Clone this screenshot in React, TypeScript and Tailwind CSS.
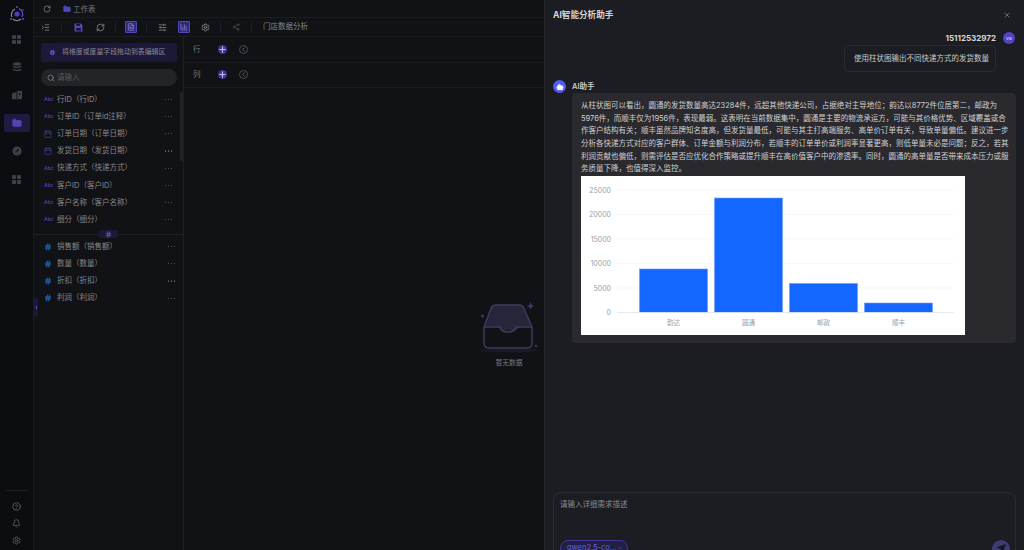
import React from "react";
import {
  RotateCw, Folder, IndentIncrease, RefreshCw, SlidersHorizontal, Share2, Search, Info, Plus, ChevronLeft,
  CircleHelp, Bell, Settings, X, Bot, Send, ChevronDown, Calendar, Hash, FileText, ChartColumn,
} from "lucide-react";

const F = { fontFamily: '"Inter","Noto Sans CJK SC",sans-serif' };

function Grid4({ c = "#3f4046" }: { c?: string }) {
  return (
    <svg width="9" height="9" viewBox="0 0 9 9">
      <rect x="0" y="0" width="4" height="4" rx="1" fill={c} />
      <rect x="5" y="0" width="4" height="4" rx="1" fill={c} />
      <rect x="0" y="5" width="4" height="4" rx="1" fill={c} />
      <rect x="5" y="5" width="4" height="4" rx="1" fill={c} />
    </svg>
  );
}

function Disc() {
  return (
    <svg width="10" height="10" viewBox="0 0 10 10">
      <ellipse cx="5" cy="2" rx="4.2" ry="1.7" fill="#3f4046" />
      <path d="M.8 3.6C2 5 8 5 9.2 3.6V5C8 6.4 2 6.4.8 5Z" fill="#3f4046" />
      <path d="M.8 6.6C2 8 8 8 9.2 6.6V8C8 9.6 2 9.6.8 8Z" fill="#3f4046" />
    </svg>
  );
}

function Store() {
  return (
    <svg width="10" height="10" viewBox="0 0 10 10">
      <path d="M0 3.5 4.5 2V9.2H0Z" fill="#3f4046" />
      <path d="M5.2 .8H10V9.2H5.2Z" fill="#3f4046" />
      <rect x="7" y="3" width="1.2" height="2" fill="#0c0d10" />
    </svg>
  );
}

function Needle() {
  return (
    <svg width="10" height="10" viewBox="0 0 10 10">
      <circle cx="5" cy="5" r="4.6" fill="#3f4046" />
      <path d="M7.2 2.8 5.8 5.8 4.2 4.2Z" fill="#0c0d10" />
      <path d="M2.8 7.2 4.2 4.2 5.8 5.8Z" fill="#0c0d10" opacity=".6" />
    </svg>
  );
}

function SaveIcon() {
  return (
    <svg width="9" height="9" viewBox="0 0 9 9">
      <path d="M.5 1Q.5.5 1 .5H6.8L8.5 2.2V8Q8.5 8.5 8 8.5H1Q.5 8.5.5 8Z" fill="#4f46b8" />
      <rect x="2.3" y="1" width="3.6" height="1.8" fill="#17161f" />
      <rect x="2.3" y="5" width="4.4" height="2.6" fill="#17161f" />
    </svg>
  );
}

function Logo() {
  return (
    <svg width="18" height="18" viewBox="0 0 18 18" fill="none">
      <path d="M4 12a6 6 0 0 1 3-8" stroke="#8a8b92" strokeWidth="1.2" />
      <path d="M11 3.6a6 6 0 0 1 3 8.4" stroke="#5b50c8" strokeWidth="1.2" />
      <path d="M5 14a6 6 0 0 0 8 0" stroke="#8a8b92" strokeWidth="1.2" />
      <circle cx="9" cy="9" r="2.6" fill="#4a3fc0" />
      <circle cx="9" cy="2" r="1" fill="#5b50c8" />
      <circle cx="3" cy="14" r="1" fill="#5b50c8" />
      <circle cx="15" cy="14" r="1" fill="#5b50c8" />
      <circle cx="15" cy="5" r="0.8" fill="#5b50c8" />
    </svg>
  );
}

const dims: [string, string][] = [
  ["a", "行ID（行ID）"],
  ["a", "订单ID（订单id注释）"],
  ["d", "订单日期（订单日期）"],
  ["d", "发货日期（发货日期）"],
  ["a", "快递方式（快递方式）"],
  ["a", "客户ID（客户ID）"],
  ["a", "客户名称（客户名称）"],
  ["a", "细分（细分）"],
];
const meas = ["销售额（销售额）", "数量（数量）", "折扣（折扣）", "利润（利润）"];

const lines = [
  "从柱状图可以看出，圆通的发货数量高达23284件，远超其他快递公司，占据绝对主导地位；韵达以8772件位居第二，邮政为",
  "5976件，而顺丰仅为1956件，表现最弱。这表明在当前数据集中，圆通是主要的物流承运方，可能与其价格优势、区域覆盖或合",
  "作客户结构有关；顺丰虽然品牌知名度高，但发货量最低，可能与其主打高端服务、高单价订单有关，导致单量偏低。建议进一步",
  "分析各快递方式对应的客户群体、订单金额与利润分布，若顺丰的订单单价或利润率显著更高，则低单量未必是问题；反之，若其",
  "利润贡献也偏低，则需评估是否应优化合作策略或提升顺丰在高价值客户中的渗透率。同时，圆通的高单量是否带来成本压力或服",
  "务质量下降，也值得深入监控。",
];

function Dots() {
  return <span className="ml-auto flex gap-[1.6px]">{[0, 1, 2].map((i) => <i key={i} className="block h-[1.2px] w-[1.2px] rounded-full bg-[#66676c]" />)}</span>;
}

function Chart() {
  const ys = [14, 38.5, 63, 87.5, 112];
  const yl = ["25000", "20000", "15000", "10000", "5000"];
  const bars: [number, number, string][] = [
    [58.5, 93, "韵达"],
    [133.5, 22, "圆通"],
    [208.5, 107.5, "邮政"],
    [283.5, 127, "顺丰"],
  ];
  return (
    <svg width="384" height="159" viewBox="0 0 384 159" className="block bg-white" style={{ fontFamily: '"Inter","Noto Sans CJK SC",sans-serif' }}>
      {ys.map((y, i) => (
        <g key={y}>
          <line x1="36" x2="373" y1={y} y2={y} stroke="#f3f4f6" strokeWidth="0.7" />
          <text x="30" y={y + 2.5} textAnchor="end" fontSize="7" fill="#9aa0ab">{yl[i]}</text>
        </g>
      ))}
      <text x="30" y="138.5" textAnchor="end" fontSize="7" fill="#9aa0ab">0</text>
      {bars.map(([x, y, l]) => (
        <g key={l}>
          <rect x={x} y={y} width="68" height={136.3 - y} fill="#1366ff" stroke="#6c9fff" strokeWidth="0.6" />
          <text x={x + 34} y="149" textAnchor="middle" fontSize="6.6" fill="#9aa0ab">{l}</text>
        </g>
      ))}
      <line x1="36" x2="373" y1="136.5" y2="136.5" stroke="#e2e4e9" strokeWidth="0.8" />
    </svg>
  );
}

function Empty() {
  return (
    <svg width="62" height="52" viewBox="0 0 62 52" fill="none">
      <ellipse cx="31" cy="48.5" rx="29" ry="1.8" fill="#1a1a20" />
      <path d="M13 6.5Q14 3 18 3H41Q45 3 46 6.5L53 24H43L38 28.5H24L19 24H6Z" fill="#26253a" />
      <path d="M6 25 13 6.5Q14 3 18 3H41Q45 3 46 6.5L54 25V41Q54 46 49 46H11Q6 46 6 41Z" stroke="#3f3c62" strokeWidth="1.4" strokeLinejoin="round" />
      <path d="M6 25H22Q23 30 30 30Q37 30 38 25H54" stroke="#3f3c62" strokeWidth="1.4" />
      <path d="M52.5 0 53.6 3 56.5 4 53.6 5 52.5 8 51.4 5 48.5 4 51.4 3Z" fill="#3f3c62" />
      <path d="M4.5 11.5 5.2 13.3 7 14 5.2 14.7 4.5 16.5 3.8 14.7 2 14 3.8 13.3Z" fill="#3f3c62" />
      <path d="M58 42 58.5 43.5 60 44 58.5 44.5 58 46 57.5 44.5 56 44 57.5 43.5Z" fill="#3f3c62" />
    </svg>
  );
}

const Sep = () => <span className="block h-[10px] w-px bg-[#1e1f24]" />;

export default function App() {
  return (
    <div className="flex h-[550px] w-[1024px] overflow-hidden bg-[#111216] text-[7.5px] leading-none text-[#85868a]" style={F}>
      {/* rail */}
      <aside className="flex w-[34px] shrink-0 flex-col items-center border-r border-[#1b1c20] bg-[#0c0d10] pt-[5px]">
        <Logo />
        <div className="mt-[11px] flex flex-col items-center gap-[18px]">
          <span className="flex h-[10px] items-center"><Grid4 /></span>
          <Disc />
          <Store />
          <span className="-my-[4px] flex h-[18px] w-[26px] items-center justify-center rounded-[2px] bg-[#1e1a42]"><Folder size={10} color="#4f46b8" fill="#4f46b8" /></span>
          <Needle />
          <span className="flex h-[10px] items-center"><Grid4 /></span>
        </div>
        <div className="mt-auto flex w-full flex-col items-center pb-[5px]">
          <span className="mb-[11px] h-px w-[22px] bg-[#1d1e22]" />
          <div className="flex flex-col items-center gap-[8px]">
            <CircleHelp size={9} color="#66676c" />
            <Bell size={9} color="#66676c" />
            <Settings size={9} color="#66676c" />
          </div>
        </div>
      </aside>

      {/* work area */}
      <div className="flex w-[510px] shrink-0 flex-col">
        <div className="flex h-[18px] shrink-0 items-center border-b border-[#1b1c20] pl-[9px]">
          <RotateCw size={8} color="#8f9094" />
          <Folder size={8} color="#4f46b8" fill="#4f46b8" className="ml-[12px]" />
          <span className="ml-[2px] translate-y-[1px] text-[#77787c]">工作表</span>
        </div>
        <div className="flex h-[19px] shrink-0 items-center border-b border-[#1b1c20] pl-[7px]">
          <IndentIncrease size={9} color="#8f9094" />
          <span className="ml-[11px]"><Sep /></span>
          <span className="ml-[12px]"><SaveIcon /></span>
          <RefreshCw size={9} color="#8f9094" className="ml-[13px]" />
          <span className="ml-[10px]"><Sep /></span>
          <span className="ml-[9px] flex h-[12px] w-[12px] items-center justify-center rounded-[1px] border border-[#4f46b8] bg-[#2f2a78]"><FileText size={8} color="#8f8bd0" /></span>
          <span className="ml-[9px]"><Sep /></span>
          <SlidersHorizontal size={9} color="#8f9094" className="ml-[11px]" />
          <span className="ml-[11px] flex h-[12px] w-[12px] items-center justify-center rounded-[1px] border border-[#4f46b8] bg-[#2f2a78]"><ChartColumn size={8} color="#8f8bd0" /></span>
          <Settings size={9} color="#9a9b9f" className="ml-[11px]" />
          <span className="ml-[10px]"><Sep /></span>
          <Share2 size={8} color="#4a4b50" className="ml-[11px]" />
          <span className="ml-[11px]"><Sep /></span>
          <span className="ml-[11px] text-[#86878b]">门店数据分析</span>
        </div>

        <div className="flex min-h-0 flex-1">
          {/* fields */}
          <div className="relative w-[150px] shrink-0 border-r border-[#1f2024] pl-[7px] pr-[6px] pt-[6px]">
            <div className="flex h-[19px] items-center rounded-[2px] bg-[#1c1838] pl-[8px] text-[6.9px] text-[#8a8a96]">
              <Info size={7} color="#0c0d10" fill="#5a50d0" />
              <span className="ml-[6px] whitespace-nowrap">将维度或度量字段拖动到表编辑区</span>
            </div>
            <div className="mt-[7px] flex h-[17px] items-center rounded-full bg-[#232428] pl-[6px] text-[#56575b]">
              <Search size={8} color="#8f9094" />
              <span className="ml-[2px]">请输入</span>
            </div>
            <div className="mt-[5px]">
              {dims.map(([t, l]) => (
                <div key={l} className="flex h-[17.15px] items-center pl-[3px] pr-[5px]">
                  <span className="flex w-[13px] items-center">
                    {t === "a" ? (
                      <span className="text-[5px] font-semibold text-[#4a3fa5]">Abc</span>
                    ) : (
                      <Calendar size={8} color="#4a3fa5" />
                    )}
                  </span>
                  <span className="whitespace-nowrap">{l}</span>
                  <Dots />
                </div>
              ))}
            </div>
            <div className="relative -ml-[7px] -mr-[6px] mt-[6px] h-px bg-[#1f2024]">
              <span className="absolute left-[65px] top-[-4px] flex h-[8px] w-[19px] items-center justify-center rounded-[2px] bg-[#1c1838]">
                <Hash size={7} color="#5a50d0" strokeWidth={3} />
              </span>
            </div>
            <div className="mt-[3px]">
              {meas.map((l) => (
                <div key={l} className="flex h-[17.15px] items-center pl-[3px] pr-[2px]">
                  <span className="flex w-[13px] items-center"><Hash size={8} color="#2074c8" strokeWidth={2.6} /></span>
                  <span className="whitespace-nowrap">{l}</span>
                  <Dots />
                </div>
              ))}
            </div>
            <span className="absolute right-0 top-[55px] h-[69px] w-[3px] rounded-sm bg-[#222327]" />
            <span className="absolute left-0 top-[261px] flex h-[18px] w-[4px] items-center justify-center rounded-r-[1px] bg-[#1c1838]"><i className="block h-[3px] w-[1px] bg-[#5a50d0]" /></span>
          </div>

          {/* canvas */}
          <div className="flex min-w-0 flex-1 flex-col">
            {["行", "列"].map((l) => (
              <div key={l} className="flex h-[25.5px] shrink-0 items-center border-b border-[#1b1c20] pl-[9px]">
                <span className="w-[25px] text-[#77787c]">{l}</span>
                <span className="flex h-[9px] w-[9px] items-center justify-center rounded-full bg-[#3f369c]"><Plus size={9} color="#c0bde8" strokeWidth={3} /></span>
                <span className="ml-[12px] flex h-[9px] w-[9px] items-center justify-center rounded-full border border-[#4a4b50]"><ChevronLeft size={7} color="#66676c" strokeWidth={3} /></span>
              </div>
            ))}
            <div className="flex flex-1 flex-col items-center pl-[290px] pt-[214px]">
              <Empty />
              <span className="mt-[6px] whitespace-nowrap text-[6.8px] text-[#77787c]">暂无数据</span>
            </div>
          </div>
        </div>
      </div>

      {/* AI panel */}
      <div className="flex min-w-0 flex-1 flex-col border-l border-[#26272b] bg-[#1c1d22] pl-[8px] pr-[8px]">
        <div className="flex h-[30px] shrink-0 items-center">
          <span className="text-[8.6px] font-bold text-[#d6d6d8]">AI智能分析助手</span>
          <X size={8} color="#8f9094" className="ml-auto mr-[5px]" />
        </div>
        <div className="mt-[2px] flex items-center justify-end">
          <span className="text-[8px] font-bold text-[#d8d8da]">15112532972</span>
          <span className="ml-[7px] mr-[1px] flex h-[12px] w-[12px] items-center justify-center rounded-full bg-[#5044c4] text-[5px] font-semibold text-[#c9c6f0]">va</span>
        </div>
        <div className="mt-[1px] flex justify-end pr-[20px]">
          <div className="flex h-[27px] w-[152px] items-center rounded-[5px] border border-[#2b2c32] pl-[9px] text-[#c9c9cc]">使用柱状图输出不同快递方式的发货数量</div>
        </div>
        <div className="mt-[8px] flex h-[14px] items-center">
          <span className="flex h-[13px] w-[13px] items-center justify-center rounded-full bg-[#4f5cf5]"><Bot size={8} color="#fff" fill="#fff" /></span>
          <span className="ml-[6px] font-semibold text-[#c9c9cc]">AI助手</span>
        </div>
        <div className="ml-[19px] rounded-[4px] bg-[#29292e] pb-[8px] pl-[9px] pt-[7px] text-[#d0d0d3]">
          {lines.map((t) => (
            <div key={t} className="h-[12.7px] whitespace-nowrap leading-[12.7px]">{t}</div>
          ))}
          <div><Chart /></div>
        </div>
        <div className="mt-[149px] h-[80px] shrink-0 rounded-[8px] border border-[#2b2c32] pl-[6px] pr-[5px] pt-[8px]">
          <div className="text-[#8a8b8f]">请输入详细需求描述</div>
          <div className="mt-[31px] flex items-start justify-between">
            <span className="flex h-[16px] w-[68px] items-center rounded-full border border-[#3f369c] bg-[#221f45] pl-[6px] text-[#6a60d8]">
              qwen2.5-co...<ChevronDown size={6} className="ml-auto mr-[4px]" color="#6a60d8" />
            </span>
            <span className="flex h-[18px] w-[18px] items-center justify-center rounded-full bg-[#3f3b73]"><Send size={9} color="#17181c" fill="#17181c" /></span>
          </div>
        </div>
      </div>
    </div>
  );
}
